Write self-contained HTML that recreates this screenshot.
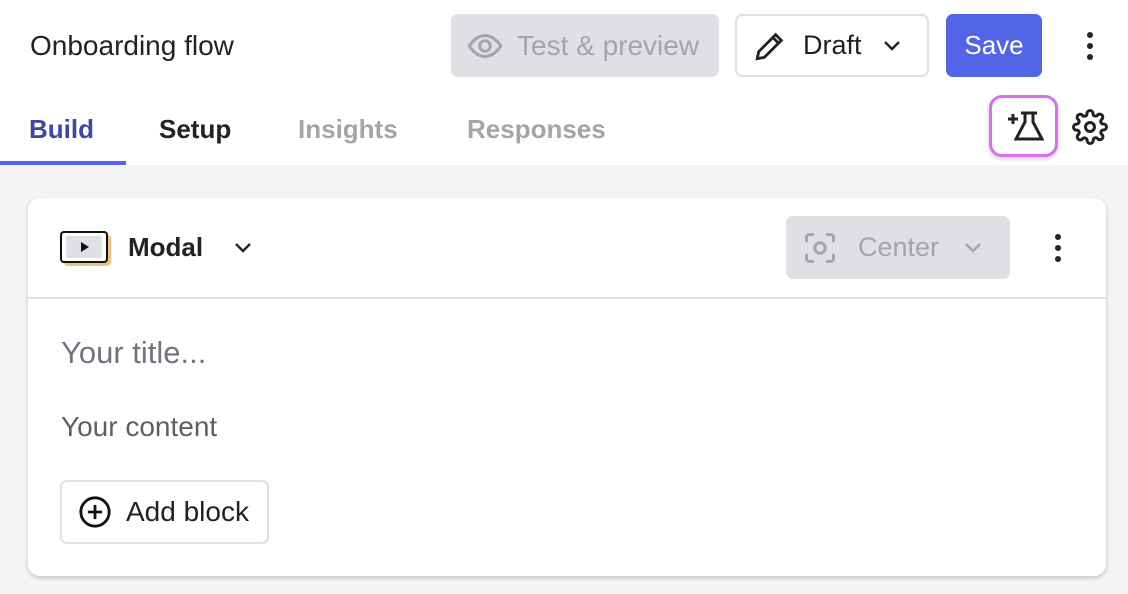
<!DOCTYPE html>
<html><head><style>
*{box-sizing:border-box;margin:0;padding:0}
body{width:1128px;height:594px;overflow:hidden;background:#f3f4f6;font-family:"Liberation Sans",sans-serif;position:relative;color:#1f2023}
.a{position:absolute}
.top{left:0;top:0;width:1128px;height:165px;background:#fff}
.btn{position:absolute;border-radius:7px;display:flex;align-items:center;font-size:26px}
.tab{position:absolute;top:114px;font-size:26px;font-weight:bold}
</style></head><body>
<div class="a top"></div>
<div class="a" style="left:30px;top:30px;font-size:28px;color:#222">Onboarding flow</div>
<div class="btn" style="left:451px;top:14px;width:268px;height:63px;background:#dfe0e4;color:#a3a5ab">
<svg style="margin-left:16px" width="36" height="36" viewBox="0 0 24 24" fill="none" stroke="#a3a5ab" stroke-width="2"><path d="M1.5 12S5.5 5 12 5s10.5 7 10.5 7-4 7-10.5 7S1.5 12 1.5 12z"/><circle cx="12" cy="12" r="3.5"/></svg>
<span style="margin-left:14px;font-size:28px">Test &amp; preview</span></div>
<div class="btn" style="left:735px;top:14px;width:194px;height:63px;background:#fff;border:2px solid #dfe0e4">
<svg style="margin-left:16px" width="34" height="34" viewBox="0 0 24 24" fill="none" stroke="#222" stroke-width="2"><path d="M3 21l1-5L16 4l4 4L8 20z"/><path d="M14 6l4 4"/></svg>
<span style="margin-left:16px;font-size:27px">Draft</span>
<svg style="margin-left:20px" width="20" height="20" viewBox="0 0 20 20" fill="none" stroke="#222" stroke-width="2.4"><path d="M3 6l7 7 7-7"/></svg></div>
<div class="btn" style="left:946px;top:14px;width:96px;height:63px;background:#5165e6;color:#fff;justify-content:center">Save</div>
<svg class="a" style="left:1082px;top:30px" width="16" height="32" viewBox="0 0 16 32" fill="#222"><circle cx="8" cy="5" r="3"/><circle cx="8" cy="16" r="3"/><circle cx="8" cy="27" r="3"/></svg>
<div class="tab" style="left:29px;color:#3c47a8">Build</div>
<div class="a" style="left:0;top:161px;width:126px;height:4px;background:#5165e6"></div>
<div class="tab" style="left:159px;color:#222">Setup</div>
<div class="tab" style="left:298px;color:#a3a5ab">Insights</div>
<div class="tab" style="left:467px;color:#a3a5ab">Responses</div>
<div class="a" style="left:989px;top:95px;width:69px;height:62px;border:3px solid #dd6cf2;border-radius:13px;background:#fff;box-shadow:0 2px 4px rgba(0,0,0,.2)"></div>
<svg class="a" style="left:1006px;top:109px" width="38" height="34" viewBox="0 0 38 34" fill="none" stroke="#222" stroke-width="3"><path d="M2 10h10M7 5v10"/><path d="M15 4h16M19 4v9L10 30h26L27 13V4"/></svg>
<svg class="a" style="left:1072px;top:109px" width="36" height="36" viewBox="0 0 24 24" fill="none" stroke="#222" stroke-width="2"><circle cx="12" cy="12" r="3"/><path d="M19.4 15a1.7 1.7 0 0 0 .3 1.8l.1.1a2 2 0 1 1-2.8 2.8l-.1-.1a1.7 1.7 0 0 0-1.8-.3 1.7 1.7 0 0 0-1 1.5V21a2 2 0 1 1-4 0v-.1a1.7 1.7 0 0 0-1.1-1.5 1.7 1.7 0 0 0-1.8.3l-.1.1a2 2 0 1 1-2.8-2.8l.1-.1a1.7 1.7 0 0 0 .3-1.8 1.7 1.7 0 0 0-1.5-1H3a2 2 0 1 1 0-4h.1a1.7 1.7 0 0 0 1.5-1.1 1.7 1.7 0 0 0-.3-1.8l-.1-.1a2 2 0 1 1 2.8-2.8l.1.1a1.7 1.7 0 0 0 1.8.3H9a1.7 1.7 0 0 0 1-1.5V3a2 2 0 1 1 4 0v.1a1.7 1.7 0 0 0 1 1.5 1.7 1.7 0 0 0 1.8-.3l.1-.1a2 2 0 1 1 2.8 2.8l-.1.1a1.7 1.7 0 0 0-.3 1.8V9a1.7 1.7 0 0 0 1.5 1H21a2 2 0 1 1 0 4h-.1a1.7 1.7 0 0 0-1.5 1z"/></svg>
<div class="a" style="left:28px;top:198px;width:1078px;height:378px;background:#fff;border-radius:12px;box-shadow:0 2px 5px rgba(0,0,0,.2)"></div>
<div class="a" style="left:28px;top:297px;width:1078px;height:2px;background:#dfe0e4"></div>
<div class="a" style="left:64px;top:235px;width:47px;height:31px;background:#f0c07e;border-radius:4px"></div>
<div class="a" style="left:60px;top:231px;width:48px;height:32px;background:#fff;border:2px solid #111;border-radius:4px"></div>
<div class="a" style="left:66px;top:236px;width:36px;height:22px;background:#dfe0e4;border-radius:2px"></div>
<svg class="a" style="left:80px;top:242px" width="10" height="10" viewBox="0 0 10 10"><path d="M1 0l8 5-8 5z" fill="#111"/></svg>
<div class="a" style="left:128px;top:232px;font-size:26px;font-weight:bold;color:#222">Modal</div>
<svg class="a" style="left:233px;top:238px" width="20" height="20" viewBox="0 0 20 20" fill="none" stroke="#222" stroke-width="2.4"><path d="M3 6l7 7 7-7"/></svg>
<div class="btn" style="left:786px;top:216px;width:224px;height:63px;background:#dfe0e4;color:#a3a5ab">
<svg style="margin-left:16px" width="36" height="36" viewBox="0 0 24 24" fill="none" stroke="#a3a5ab" stroke-width="2"><path d="M3 8V5a2 2 0 0 1 2-2h3M16 3h3a2 2 0 0 1 2 2v3M21 16v3a2 2 0 0 1-2 2h-3M8 21H5a2 2 0 0 1-2-2v-3"/><circle cx="12" cy="12" r="3.5"/></svg>
<span style="margin-left:20px;font-size:27px">Center</span>
<svg style="margin-left:24px" width="20" height="20" viewBox="0 0 20 20" fill="none" stroke="#a3a5ab" stroke-width="2.4"><path d="M3 6l7 7 7-7"/></svg></div>
<svg class="a" style="left:1050px;top:232px" width="16" height="32" viewBox="0 0 16 32" fill="#222"><circle cx="8" cy="5" r="3"/><circle cx="8" cy="16" r="3"/><circle cx="8" cy="27" r="3"/></svg>
<div class="a" style="left:61px;top:335px;font-size:31px;color:#707380">Your title...</div>
<div class="a" style="left:61px;top:411px;font-size:28px;color:#5c5f68">Your content</div>
<div class="btn" style="left:60px;top:480px;width:209px;height:64px;border:2px solid #dfe0e4;background:#fff">
<svg style="margin-left:16px" width="34" height="34" viewBox="0 0 24 24" fill="none" stroke="#111" stroke-width="2"><circle cx="12" cy="12" r="10"/><path d="M12 7v10M7 12h10"/></svg>
<span style="margin-left:14px;color:#222;font-size:28px">Add block</span></div>
</body></html>
